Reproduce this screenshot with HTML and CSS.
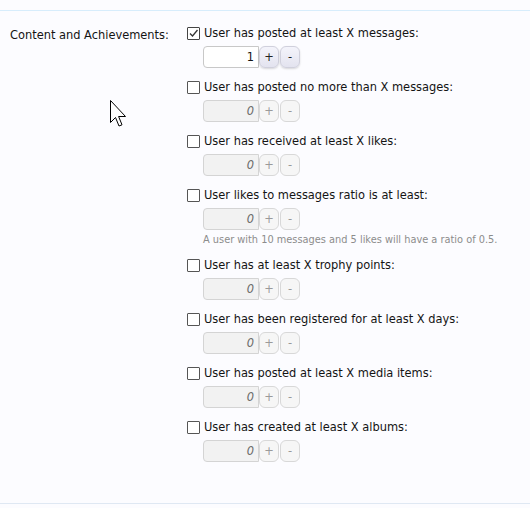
FILE: index.html
```html
<!DOCTYPE html>
<html>
<head>
<meta charset="utf-8">
<link rel="stylesheet" href="styles.css">
</head>
<body>
<div class="page">
  <div class="section">
    <div class="label">Content and Achievements:</div>
    <ul class="opts">
      <li class="opt">
        <label class="chk"><span class="box checked"><svg width="11" height="11" viewBox="0 0 11 11"><path d="M2 5.5 L4.5 8 L9.5 2" fill="none" stroke="#333" stroke-width="1.3"/></svg></span>User has posted at least X messages:</label>
        <div class="spin"><span class="num active">1</span><span class="btn active">+</span><span class="btn active">-</span></div>
      </li>
      <li class="opt">
        <label class="chk"><span class="box"></span>User has posted no more than X messages:</label>
        <div class="spin"><span class="num">0</span><span class="btn">+</span><span class="btn">-</span></div>
      </li>
      <li class="opt">
        <label class="chk"><span class="box"></span>User has received at least X likes:</label>
        <div class="spin"><span class="num">0</span><span class="btn">+</span><span class="btn">-</span></div>
      </li>
      <li class="opt">
        <label class="chk"><span class="box"></span>User likes to messages ratio is at least:</label>
        <div class="spin"><span class="num">0</span><span class="btn">+</span><span class="btn">-</span></div>
        <p class="hint">A user with 10 messages and 5 likes will have a ratio of 0.5.</p>
      </li>
      <li class="opt">
        <label class="chk"><span class="box"></span>User has at least X trophy points:</label>
        <div class="spin"><span class="num">0</span><span class="btn">+</span><span class="btn">-</span></div>
      </li>
      <li class="opt">
        <label class="chk"><span class="box"></span>User has been registered for at least X days:</label>
        <div class="spin"><span class="num">0</span><span class="btn">+</span><span class="btn">-</span></div>
      </li>
      <li class="opt">
        <label class="chk"><span class="box"></span>User has posted at least X media items:</label>
        <div class="spin"><span class="num">0</span><span class="btn">+</span><span class="btn">-</span></div>
      </li>
      <li class="opt">
        <label class="chk"><span class="box"></span>User has created at least X albums:</label>
        <div class="spin"><span class="num">0</span><span class="btn">+</span><span class="btn">-</span></div>
      </li>
    </ul>
  </div>
</div>
<svg class="cursor" width="18" height="30" viewBox="0 0 18 30"><path d="M0.5 0.5 L0.5 22.5 L5.5 17.5 L9 26 L12 24.8 L8.6 16.5 L15.5 16.5 Z" fill="#fff" stroke="#000" stroke-width="1"/></svg>
</body>
</html>
```
FILE: styles.css
```css
html, body {
  margin: 0;
  padding: 0;
  background: #fcfcff;
}
body {
  font-family: "DejaVu Sans Condensed", "DejaVu Sans", sans-serif;
  font-size: 12.7px;
  color: #141414;
}
.page {
  padding-top: 10px;
}
.section {
  border-top: 1px solid #d7edfc;
  border-bottom: 1px solid #dfe8f3;
  display: flex;
  padding: 15px 0 0 10px;
  height: 494px;
  box-sizing: border-box;
}
.label {
  width: 177px;
  padding-top: 1px;
  color: #141414;
}
.opts {
  list-style: none;
  margin: 0;
  padding: 0;
}
.opt {
  margin-bottom: 12px;
}
.chk {
  display: flex;
  align-items: center;
  height: 14px;
  line-height: 14px;
}
.box {
  width: 11px;
  height: 11px;
  border: 1px solid #555;
  background: #fff;
  margin-right: 4px;
  display: flex;
  align-items: center;
  justify-content: center;
  border-radius: 1px;
  flex: none;
}
.box.checked { border-color: #444; }
.spin {
  display: flex;
  margin: 6px 0 0 16px;
  height: 22px;
}
.num {
  width: 56px;
  height: 22px;
  box-sizing: border-box;
  border: 1px solid #d4d4d4;
  border-radius: 4px 0 0 4px;
  background: #f2f2f2;
  text-align: right;
  padding-right: 4px;
  line-height: 20px;
  font-style: italic;
  color: #6a6a6a;
}
.num.active {
  background: #fff;
  font-style: normal;
  color: #141414;
  border-color: #c8c8c8;
}
.btn {
  width: 20px;
  height: 22px;
  box-sizing: border-box;
  border: 1px solid #d8d8d8;
  border-radius: 6px;
  background: #f6f6f6;
  text-align: center;
  line-height: 19px;
  color: #9a9a9a;
  margin-left: 1px;
}
.btn.active {
  background: linear-gradient(#f4f4fb, #e3e3ef);
  color: #222;
  border-color: #d0d0dc;
  box-shadow: 0 1px 2px rgba(0,0,0,0.15);
}
.spin .num + .btn { margin-left: 0; }
.hint {
  margin: 4px 0 0 16px;
  font-size: 10.9px;
  color: #8c8c8c;
  line-height: 12px;
}
.cursor {
  position: absolute;
  left: 110px;
  top: 100px;
}
```
